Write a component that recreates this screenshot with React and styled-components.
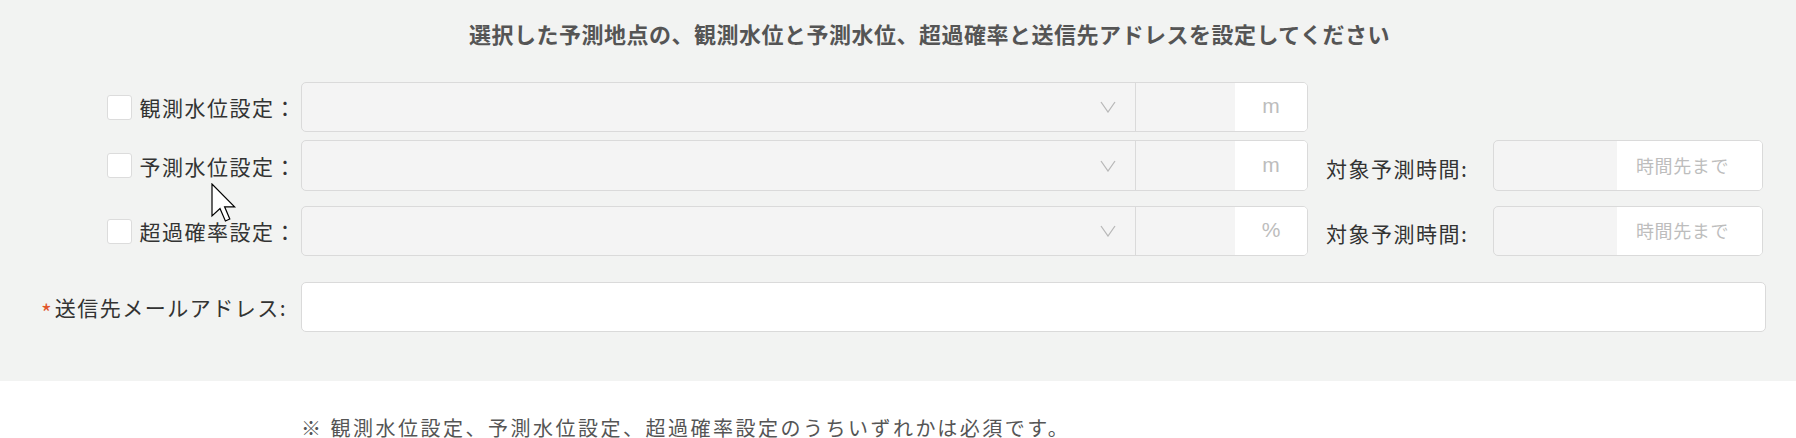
import React from "react";
import styled, { createGlobalStyle } from "styled-components";

const GlobalStyle = createGlobalStyle`
  body {
    margin: 0;
    background: #ffffff;
    font-family: "Noto Sans CJK JP", "Noto Sans", sans-serif;
  }
`;

const Page = styled.div`
  position: relative;
  width: 1796px;
  height: 438px;
  overflow: hidden;
`;

const Panel = styled.div`
  background: #f2f3f2;
  padding: 18px 30px 49px 0;
`;

const Title = styled.h2`
  margin: 0 0 34px;
  padding-left: 93px;
  text-align: center;
  font-size: 22px;
  line-height: 30px;
  font-weight: 700;
  letter-spacing: 0.5px;
  color: #555555;
`;

const Row = styled.div`
  display: flex;
  align-items: center;
  height: ${(p) => p.$h || 50}px;
  margin-bottom: ${(p) => p.$gap}px;
`;

const LabelCell = styled.label`
  width: 301px;
  flex: none;
  box-sizing: border-box;
  display: flex;
  align-items: center;
  justify-content: flex-end;
  padding-right: ${(p) => p.$pad}px;
  font-size: 21px;
  letter-spacing: 1.5px;
  color: #333333;
  white-space: nowrap;
`;

const Check = styled.span`
  width: 23px;
  height: 23px;
  margin-right: 8px;
  background: #ffffff;
  border: 1px solid #dcdcdc;
  border-radius: 3px;
`;

const Required = styled.span`
  color: #e1552b;
  font-size: 23px;
  margin-top: 9px;
  margin-right: 3px;
  letter-spacing: 0;
`;

const Group = styled.div`
  display: flex;
  width: ${(p) => p.$width}px;
  height: 100%;
  flex: none;
  box-sizing: border-box;
  border: 1px solid #dadada;
  border-radius: 5px;
  overflow: hidden;
  background: #f4f4f4;
`;

const Select = styled.div`
  flex: none;
  width: 834px;
  display: flex;
  align-items: center;
  justify-content: flex-end;
  padding-right: 19px;
  box-sizing: border-box;
  border-right: 1px solid #dadada;
`;

const Field = styled.div`
  width: ${(p) => p.$width}px;
  flex: none;
`;

const Suffix = styled.div`
  flex: 1;
  display: flex;
  align-items: center;
  justify-content: ${(p) => (p.$left ? "flex-start" : "center")};
  padding-left: ${(p) => (p.$left ? 19 : 0)}px;
  background: #ffffff;
  color: #bdbdbd;
  font-size: ${(p) => (p.$small ? 18 : 21)}px;
  letter-spacing: ${(p) => (p.$small ? 0.6 : 0)}px;
  font-family: ${(p) =>
    p.$small ? '"Noto Sans CJK JP", sans-serif' : '"Liberation Sans", sans-serif'};
  padding-bottom: 2px;
`;

const SideLabel = styled.div`
  width: 185px;
  flex: none;
  box-sizing: border-box;
  padding-left: 18px;
  padding-top: 4px;
  font-size: 21px;
  letter-spacing: 1.5px;
  color: #333333;
  white-space: nowrap;
`;

const EmailInput = styled.div`
  flex: 1;
  height: 100%;
  box-sizing: border-box;
  border: 1px solid #dadada;
  border-radius: 5px;
  background: #ffffff;
`;

const Note = styled.p`
  margin: 33px 0 0;
  padding-left: 301px;
  font-size: 20px;
  line-height: 28px;
  letter-spacing: 2.5px;
  color: #555555;
  white-space: nowrap;
`;

const Cursor = styled.svg`
  position: absolute;
  left: 211px;
  top: 183px;
`;

function Chevron() {
  return (
    <svg width="16" height="12" viewBox="0 0 16 12">
      <polyline points="1,1 8,11 15,1" fill="none" stroke="#b9b9b9" strokeWidth="1.3" />
    </svg>
  );
}

function LevelRow({ label, unit, gap, h, target }) {
  return (
    <Row $gap={gap} $h={h}>
      <LabelCell $pad={4}>
        <Check />
        {label}：
      </LabelCell>
      <Group $width={1007}>
        <Select>
          <Chevron />
        </Select>
        <Field $width={99} />
        <Suffix>{unit}</Suffix>
      </Group>
      {target && (
        <>
          <SideLabel>対象予測時間:</SideLabel>
          <Group $width={270}>
            <Field $width={123} />
            <Suffix $small $left>時間先まで</Suffix>
          </Group>
        </>
      )}
    </Row>
  );
}

export default function App() {
  return (
    <Page>
      <GlobalStyle />
      <Panel>
        <Title>選択した予測地点の、観測水位と予測水位、超過確率と送信先アドレスを設定してください</Title>
        <LevelRow label="観測水位設定" unit="m" gap={8} />
        <LevelRow label="予測水位設定" unit="m" gap={15} h={51} target />
        <LevelRow label="超過確率設定" unit="%" gap={26} target />
        <Row $gap={0}>
          <LabelCell $pad={14}>
            <Required>*</Required>
            送信先メールアドレス:
          </LabelCell>
          <EmailInput />
        </Row>
      </Panel>
      <Note>※ 観測水位設定、予測水位設定、超過確率設定のうちいずれかは必須です。</Note>
      <Cursor width="26" height="40" viewBox="0 0 13 20">
        <path
          d="M0.5,0.5 L0.5,16.5 L4.5,12.8 L7.2,19 L9.4,18 L6.8,11.9 L11.8,11.9 Z"
          fill="#ffffff"
          stroke="#000000"
          strokeWidth="0.6"
          strokeLinejoin="miter"
        />
      </Cursor>
    </Page>
  );
}
